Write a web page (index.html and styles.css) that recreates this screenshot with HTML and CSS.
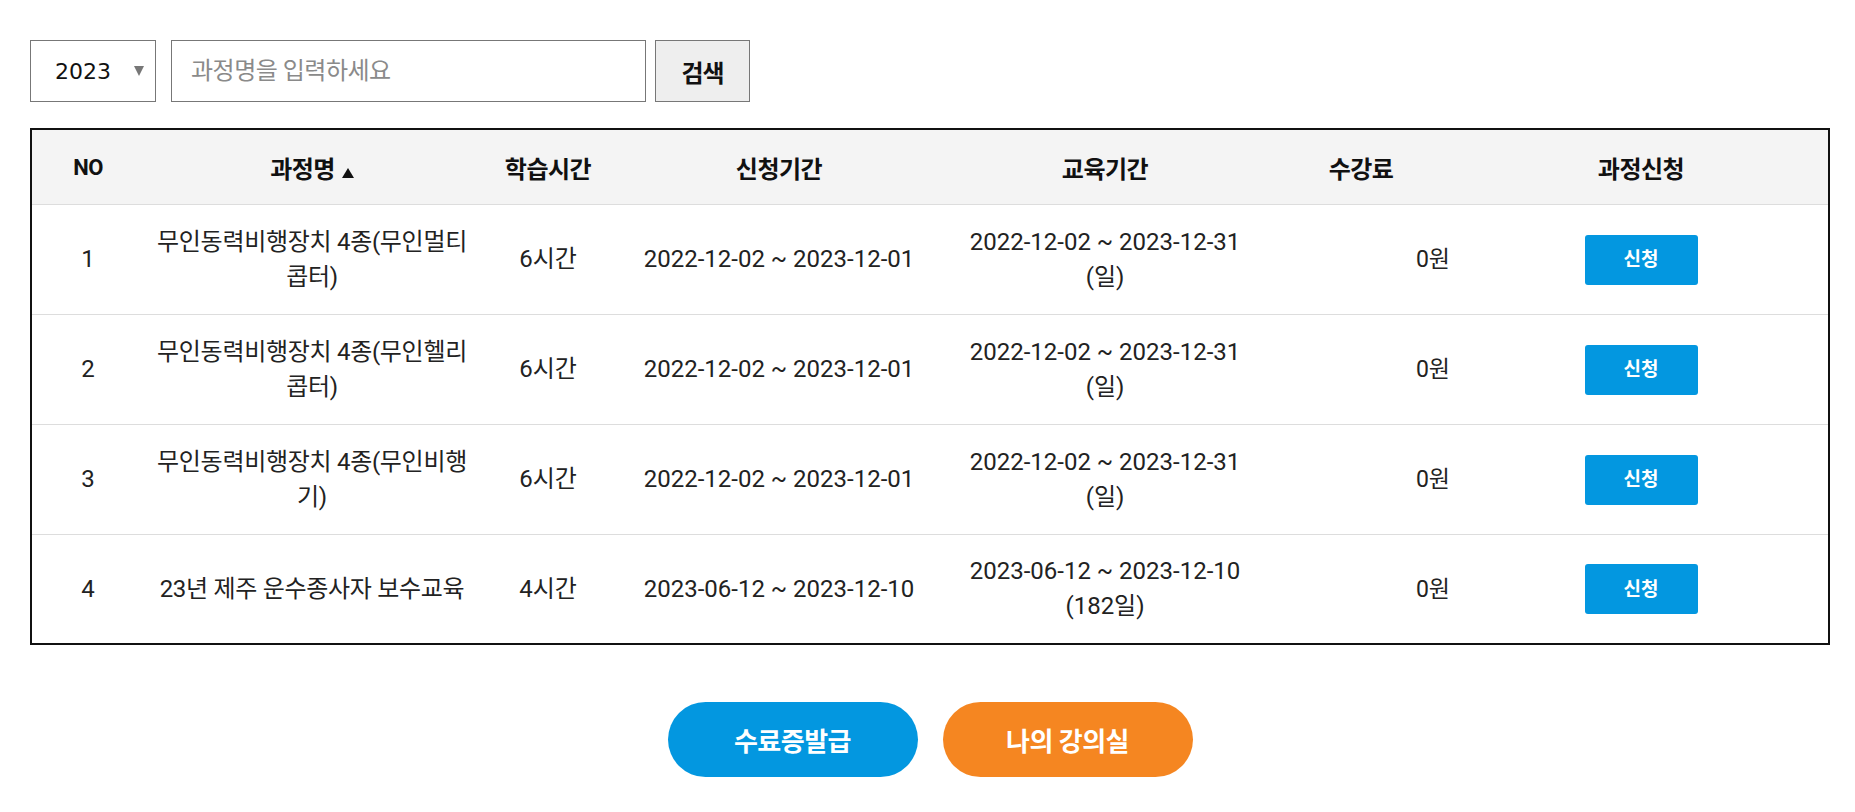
FILE: index.html
```html
<!DOCTYPE html>
<html lang="ko">
<head>
<meta charset="utf-8">
<title>과정신청</title>
<link rel="stylesheet" href="styles.css">
</head>
<body>
<div class="page">
  <form class="search">
    <div class="select-wrap">
      <select class="year"><option>2023</option></select>
    </div>
    <input class="keyword" type="text" placeholder="과정명을 입력하세요">
    <button class="btn-search" type="button">검색</button>
  </form>

  <div class="table-box">
    <table class="course-table">
      <colgroup>
        <col class="c-no">
        <col class="c-name">
        <col class="c-time">
        <col class="c-apply">
        <col class="c-edu">
        <col class="c-fee">
        <col class="c-btn">
      </colgroup>
      <thead>
        <tr>
          <th class="no">NO</th>
          <th>과정명<svg class="sort" width="12" height="10" viewBox="0 0 12 10"><polygon points="6,0 12,10 0,10" fill="#111"/></svg></th>
          <th>학습시간</th>
          <th>신청기간</th>
          <th>교육기간</th>
          <th>수강료</th>
          <th>과정신청</th>
        </tr>
      </thead>
      <tbody>
        <tr>
          <td>1</td>
          <td class="name">무인동력비행장치 4종(무인멀티콥터)</td>
          <td>6시간</td>
          <td>2022-12-02 ~ 2023-12-01</td>
          <td>2022-12-02 ~ 2023-12-31 (일)</td>
          <td class="fee">0원</td>
          <td><a class="btn-apply" href="#">신청</a></td>
        </tr>
        <tr>
          <td>2</td>
          <td class="name">무인동력비행장치 4종(무인헬리콥터)</td>
          <td>6시간</td>
          <td>2022-12-02 ~ 2023-12-01</td>
          <td>2022-12-02 ~ 2023-12-31 (일)</td>
          <td class="fee">0원</td>
          <td><a class="btn-apply" href="#">신청</a></td>
        </tr>
        <tr>
          <td>3</td>
          <td class="name">무인동력비행장치 4종(무인비행기)</td>
          <td>6시간</td>
          <td>2022-12-02 ~ 2023-12-01</td>
          <td>2022-12-02 ~ 2023-12-31 (일)</td>
          <td class="fee">0원</td>
          <td><a class="btn-apply" href="#">신청</a></td>
        </tr>
        <tr>
          <td>4</td>
          <td class="name">23년 제주 운수종사자 보수교육</td>
          <td>4시간</td>
          <td>2023-06-12 ~ 2023-12-10</td>
          <td>2023-06-12 ~ 2023-12-10 (182일)</td>
          <td class="fee">0원</td>
          <td><a class="btn-apply" href="#">신청</a></td>
        </tr>
      </tbody>
    </table>
  </div>

  <div class="actions">
    <a class="btn-pill btn-blue" href="#">수료증발급</a>
    <a class="btn-pill btn-orange" href="#">나의 강의실</a>
  </div>
</div>
</body>
</html>
```

FILE: styles.css
```css
* {
  box-sizing: border-box;
}

body {
  margin: 0;
  background: #fff;
  color: #222;
  font-family: Roboto, "Noto Sans CJK KR", sans-serif;
  font-size: 24px;
}

.page {
  padding: 40px 25px 0 30px;
}

/* search bar */
.search {
  display: flex;
  height: 62px;
  margin: 0;
}

.select-wrap {
  position: relative;
  width: 126px;
  height: 62px;
}

.select-wrap::after {
  content: "";
  position: absolute;
  right: 12px;
  top: 26px;
  border-left: 5.5px solid transparent;
  border-right: 5.5px solid transparent;
  border-top: 10px solid #777;
  pointer-events: none;
}

.year {
  -webkit-appearance: none;
  appearance: none;
  width: 100%;
  height: 100%;
  margin: 0;
  border: 1px solid #777;
  border-radius: 0;
  background: #fff;
  color: #111;
  font-family: "DejaVu Sans", sans-serif;
  font-size: 22px;
  padding: 0 0 0 24px;
  outline: none;
}

.keyword {
  margin: 0 0 0 15px;
  width: 475px;
  height: 62px;
  border: 1px solid #777;
  border-radius: 0;
  padding: 0 19px;
  font-family: Roboto, "Noto Sans CJK KR", sans-serif;
  font-size: 24px;
  letter-spacing: -0.5px;
  color: #222;
  outline: none;
}

.keyword::placeholder {
  color: #8a8a8a;
}

.btn-search {
  margin: 0 0 0 9px;
  width: 95px;
  height: 62px;
  border: 1px solid #777;
  border-radius: 0;
  background: #eee;
  color: #111;
  font-family: Roboto, "Noto Sans CJK KR", sans-serif;
  font-size: 24px;
  font-weight: 700;
  letter-spacing: -1px;
  padding: 0;
}

/* table */
.table-box {
  margin-top: 26px;
  width: 1800px;
  border: 2px solid #111;
}

.course-table {
  width: 100%;
  border-collapse: separate;
  border-spacing: 0;
  table-layout: fixed;
}

.c-no { width: 112px; }
.c-name { width: 336px; }
.c-time { width: 136px; }
.c-apply { width: 326px; }
.c-edu { width: 326px; }
.c-fee { width: 186px; }
.c-btn { width: 374px; }

.course-table th {
  height: 75px;
  padding: 0;
  background: #f4f4f4;
  border-bottom: 1px solid #ddd;
  color: #111;
  font-size: 24px;
  font-weight: 700;
  letter-spacing: -0.5px;
  text-align: center;
  vertical-align: middle;
}

.course-table th.no {
  font-size: 22px;
}

.sort {
  margin-left: 7px;
  vertical-align: 0;
}

.course-table td {
  height: 110px;
  padding: 0 10px;
  border-bottom: 1px solid #ddd;
  color: #222;
  font-size: 24px;
  line-height: 35px;
  text-align: center;
  vertical-align: middle;
}

.course-table tbody tr:last-child td {
  height: 108px;
  border-bottom: 0;
}

.course-table td.name {
  padding: 0 10px;
  letter-spacing: -0.3px;
}

.course-table td.fee {
  text-align: right;
  padding-right: 4px;
  font-size: 23px;
}

.btn-apply {
  display: inline-flex;
  align-items: center;
  justify-content: center;
  width: 113px;
  height: 50px;
  border-radius: 3px;
  background: #0397e0;
  color: #fff;
  font-size: 19px;
  font-weight: 700;
  text-decoration: none;
  vertical-align: middle;
}

/* bottom actions */
.actions {
  display: flex;
  justify-content: center;
  gap: 25px;
  width: 1800px;
  margin-top: 57px;
}

.btn-pill {
  display: flex;
  align-items: center;
  justify-content: center;
  width: 250px;
  height: 75px;
  border-radius: 38px;
  color: #fff;
  font-size: 26px;
  font-weight: 700;
  letter-spacing: -0.5px;
  text-decoration: none;
}

.btn-blue {
  background: #0397e0;
}

.btn-orange {
  background: #f58621;
}
```
